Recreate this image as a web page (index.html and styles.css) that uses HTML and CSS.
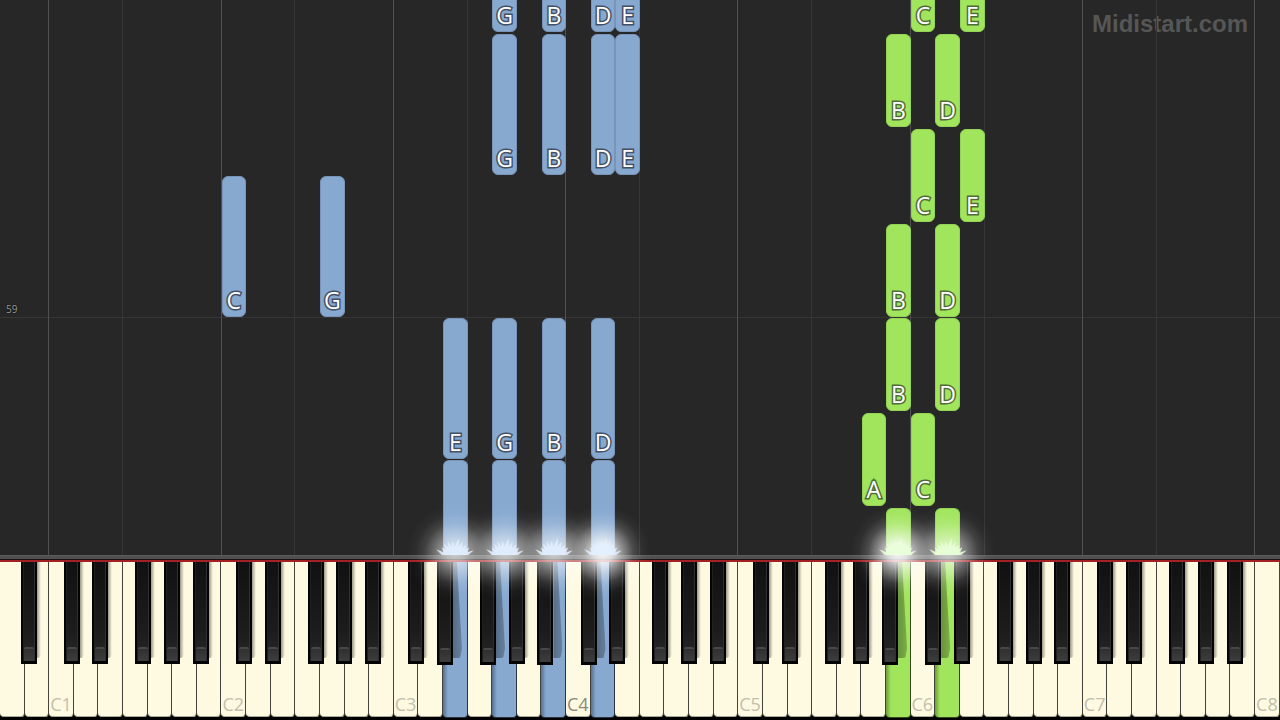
FILE: index.html
```html
<!DOCTYPE html>
<html lang="en">
<head>
    <meta charset="UTF-8">
    <title>Midistart.com</title>
    <link rel="stylesheet" href="styles.css">
</head>
<body>
    <svg width="0" height="0" class="defs" aria-hidden="true">
        <symbol id="burst" viewBox="0 0 40 18">
            <path d="M6 18 L0 12 L8 15 L6 10 L10 12.500 L8.500 6 L13 10 L12 3 L16 9 L17.500 3 L19.500 9 L24 0 L24 9 L28 4 L27.500 10.500 L32 6.500 L31 12 L35 10 L33 15 L40 13 L34 18 Z"/>
        </symbol>
    </svg>
    <main class="player">
        <section class="roll" id="roll">
            <div class="measure"><span>59</span></div>
            <p class="brand">Midistart.com</p>
        </section>
        <div class="rail"></div>
        <section class="keyboard" id="keyboard">
            <div class="whites" id="whites"></div>
        </section>
    </main>
    <script src="piano.js"></script>
</body>
</html>
```
FILE: styles.css
```css
* {
    box-sizing: border-box;
}
body {
    margin: 0;
    background-color: #000;
    font-family: "Open Sans", "Noto Sans", sans-serif;
}
.defs {
    position: absolute;
}
.player {
    --unit: calc(100% / 52);
    display: flex;
    flex-direction: column;
    height: 100vh;
    overflow: hidden;
}

/* falling notes */
.roll {
    position: relative;
    flex: 1;
    background-color: #272727;
}
.line {
    position: absolute;
    top: 0;
    bottom: 0;
    left: calc(var(--key) * var(--unit));
    width: 1px;
    margin-left: -1px;
    background-color: #363636;
}
.line.octave {
    background-color: #515151;
}
.measure {
    position: absolute;
    left: 0;
    right: 0;
    bottom: 237px;
    padding-left: 6px;
    border-bottom: 1px solid #363636;
    color: #999;
    font-size: 10px;
    line-height: 16px;
    text-shadow: 0 0 2px #000;
}
.brand {
    position: absolute;
    top: 8px;
    right: 32px;
    margin: 0;
    color: #565656;
    font: bold 24px/32px "Liberation Sans", Arial, sans-serif;
}
.note {
    position: absolute;
    left: calc(var(--key) * var(--unit));
    bottom: var(--start);
    width: var(--unit);
    height: var(--length);
    display: flex;
    align-items: flex-end;
    justify-content: center;
    border: 1px solid #7894b8;
    border-radius: 6px;
    background-color: #87a9d0;
    color: #fff;
    font-size: 23px;
    font-weight: 500;
    line-height: 32px;
    -webkit-text-stroke: 3px #434f62;
    paint-order: stroke fill;
}
.note.right {
    border-color: #93d355;
    background-color: #a1e55c;
    -webkit-text-stroke-color: #506b38;
}
.note.playing {
    border-bottom: none;
    border-radius: 6px 6px 0 0;
}

.rail {
    height: 7px;
    background: linear-gradient(#5a5a5a 0 1px, #505050 1px 4px, #1c1214 4px 5px, #a32024 5px);
}

/* keys */
.keyboard {
    position: relative;
    height: 158px;
    background-color: #000;
}
.whites {
    display: flex;
    height: 156px;
}
.white {
    flex: 1;
    min-width: 0;
    display: flex;
    align-items: flex-end;
    justify-content: center;
    height: 155px;
    padding: 0;
    border: 0;
    border-right: 1px solid #44433c;
    border-bottom: 1px solid #aaa898;
    border-radius: 0 0 4px 4px;
    background-color: #fefae2;
    color: #c2bfae;
    font: 18px/24px "Open Sans", "Noto Sans", sans-serif;
}
.white.middle {
    color: #8b897c;
}
.white.down {
    height: 156px;
    border-color: #2b3542;
    background: linear-gradient(90deg, #56708f, #87a9d0 5px);
}
.white.down.right {
    border-color: #33491d;
    background: linear-gradient(90deg, #6b9c3b, #a1e55c 5px);
}
.black {
    position: absolute;
    top: 0;
    left: calc(var(--key) * var(--unit));
    width: 16px;
    height: 102px;
    padding: 0;
    border: 2px solid #030303;
    border-top: 0;
    border-bottom-width: 3px;
    background: linear-gradient(#111, #1c1c1c 70%, #282828);
    box-shadow: inset 1px 0 #202020, inset -1px 0 #303030;
}
.black::before {
    content: "";
    position: absolute;
    left: 1px;
    right: 1px;
    bottom: 0;
    height: 12px;
    border-top: 2px solid #484848;
    border-radius: 2px 2px 0 0;
    background: linear-gradient(#303030, #3d3d3d);
}
.black::after {
    content: "";
    position: absolute;
    top: 0;
    left: 14px;
    width: 4px;
    height: 96px;
    border-radius: 0 0 4px 0;
    background: linear-gradient(90deg, rgba(60, 55, 45, .5), rgba(60, 55, 45, 0));
}
.black.cast {
    height: 103px;
}
.black.cast::after {
    width: 9px;
    background: linear-gradient(90deg, rgba(0, 0, 0, .36), rgba(0, 0, 0, .24));
    clip-path: polygon(0 0, 45% 0, 100% 90%, 80% 100%, 0 100%);
}

/* hit effect over the strike line */
.hit {
    position: absolute;
    bottom: 100%;
    left: calc((var(--key) + .5) * var(--unit));
    width: 0;
    height: 7px;
    pointer-events: none;
}
.hit::before {
    content: "";
    position: absolute;
    left: -48px;
    top: -50px;
    width: 96px;
    height: 96px;
    background: radial-gradient(closest-side, rgba(255, 255, 255, .7), rgba(255, 255, 255, .58) 20%, rgba(255, 255, 255, .34) 42%, rgba(255, 255, 255, .13) 63%, rgba(255, 255, 255, .03) 82%, transparent);
}
.hit.strong::before {
    background: radial-gradient(closest-side, rgba(255, 255, 255, .95), rgba(255, 255, 255, .8) 20%, rgba(255, 255, 255, .46) 42%, rgba(255, 255, 255, .17) 63%, rgba(255, 255, 255, .04) 82%, transparent);
}
.hit svg {
    position: absolute;
    left: -20px;
    bottom: 7px;
    width: 40px;
    height: 17px;
    fill: #e2efff;
    opacity: .85;
}
.hit.right svg {
    fill: #e9ffda;
}
```
FILE: piano.js
```js
const WHITE_KEYS = 52;
const roll = document.getElementById("roll");
const keyboard = document.getElementById("keyboard");
const whites = document.getElementById("whites");

// [white key index, start above the strike line, length, label]
const left = [
    [20, 523, 94, "G"], [22, 523, 94, "B"], [24, 523, 94, "D"], [25, 523, 94, "E"],
    [20, 380, 141, "G"], [22, 380, 141, "B"], [24, 380, 141, "D"], [25, 380, 141, "E"],
    [9, 238, 141, "C"], [13, 238, 141, "G"],
    [18, 96, 141, "E"], [20, 96, 141, "G"], [22, 96, 141, "B"], [24, 96, 141, "D"],
    [18, 0, 95, ""], [20, 0, 95, ""], [22, 0, 95, ""], [24, 0, 95, ""]
];
const right = [
    [37, 523, 94, "C"], [39, 523, 94, "E"],
    [36, 428, 93, "B"], [38, 428, 93, "D"],
    [37, 333, 93, "C"], [39, 333, 93, "E"],
    [36, 238, 93, "B"], [38, 238, 93, "D"],
    [36, 144, 93, "B"], [38, 144, 93, "D"],
    [35, 49, 93, "A"], [37, 49, 93, "C"],
    [36, 0, 47, ""], [38, 0, 47, ""]
];
const pressed = { 18: "left", 20: "left", 22: "left", 24: "left", 36: "right", 38: "right" };
const strong = [24, 36];

function add(parent, tag, className, key) {
    const el = document.createElement(tag);
    el.className = className;
    if (key !== undefined) el.style.setProperty("--key", key);
    parent.appendChild(el);
    return el;
}

function drawNotes(notes, hand) {
    for (const [key, start, length, label] of notes) {
        const note = add(roll, "div", "note " + hand + (start === 0 ? " playing" : ""), key);
        note.style.setProperty("--start", start + "px");
        note.style.setProperty("--length", length + "px");
        note.textContent = label;
    }
}

for (let i = 0; i < WHITE_KEYS; i++) {
    const step = (i + 5) % 7; // 0 = C, 3 = F
    const octave = Math.floor((i + 5) / 7);
    const name = "CDEFGAB"[step] + octave;
    if (step === 0) add(roll, "div", "line octave", i);
    if (step === 3) add(roll, "div", "line", i);

    const key = add(whites, "button", "white");
    key.setAttribute("aria-label", name);
    if (step === 0) key.textContent = name;
    if (name === "C4") key.classList.add("middle");
    if (pressed[i]) key.classList.add("down", pressed[i]);
}

// black keys sit on an even twelve-step grid inside each octave
for (let octave = 0; octave < 8; octave++) {
    for (const [semitone, name, next] of [[1, "C#", 1], [3, "D#", 2], [6, "F#", 4], [8, "G#", 5], [10, "A#", 6]]) {
        if (octave === 0 && semitone < 10) continue;
        const first = 2 + (octave - 1) * 7;
        const key = add(keyboard, "button", "black", first + semitone * 7 / 12);
        key.setAttribute("aria-label", name + octave);
        if (pressed[first + next]) key.classList.add("cast");
    }
}

drawNotes(left, "left");
drawNotes(right, "right");

for (const key in pressed) {
    const hit = add(keyboard, "div", "hit " + pressed[key], key);
    if (strong.includes(Number(key))) hit.classList.add("strong");
    hit.innerHTML = '<svg><use href="#burst"/></svg>';
}
```
